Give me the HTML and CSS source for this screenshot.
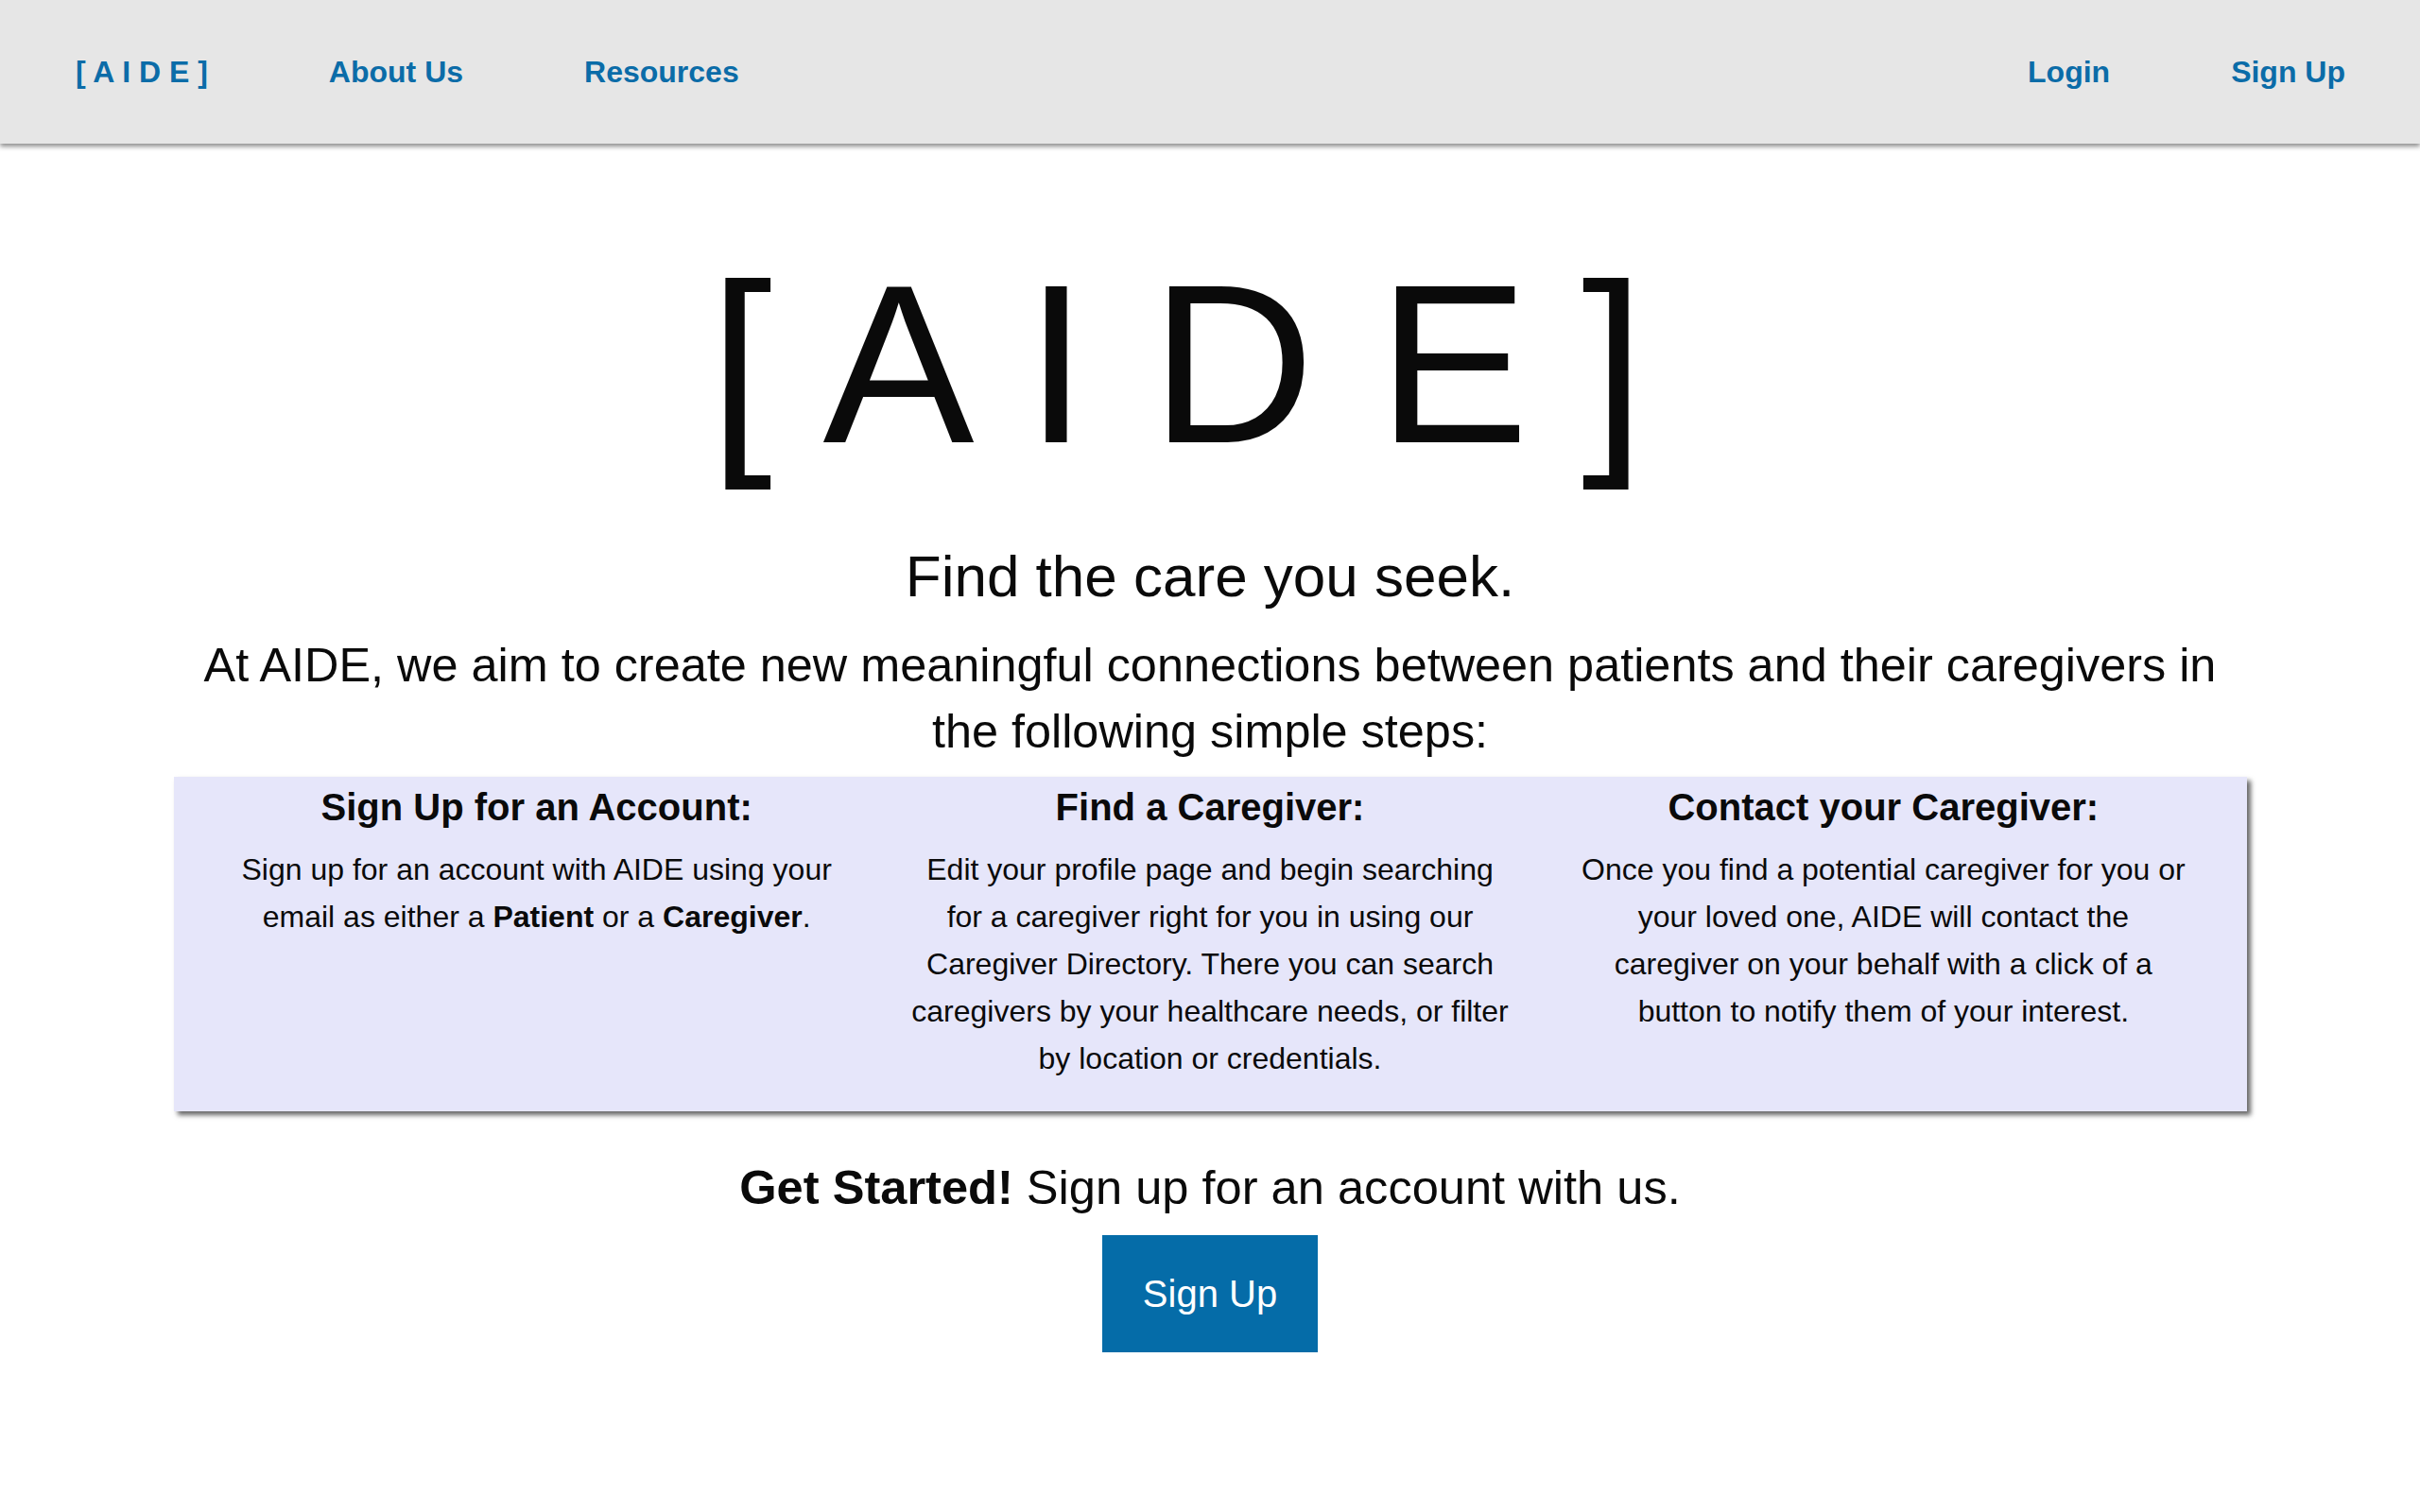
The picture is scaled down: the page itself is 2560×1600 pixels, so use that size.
FILE: index.html
```html
<!DOCTYPE html>
<html lang="en">
<head>
<meta charset="utf-8">
<title>AIDE</title>
<link rel="stylesheet" href="styles.css">
</head>
<body>
<header class="navbar">
  <nav class="nav-left">
    <a class="nav-link" href="#">[ A I D E ]</a>
    <a class="nav-link" href="#">About Us</a>
    <a class="nav-link" href="#">Resources</a>
  </nav>
  <nav class="nav-right">
    <a class="nav-link" href="#">Login</a>
    <a class="nav-link" href="#">Sign Up</a>
  </nav>
</header>
<main class="main">
  <h1 class="logo">[ A I D E <span class="logo-close">]</span></h1>
  <h2 class="tagline">Find the care you seek.</h2>
  <p class="intro">At AIDE, we aim to create new meaningful connections between patients and their caregivers in the following simple steps:</p>
  <section class="steps">
    <div class="step">
      <h3 class="step-title">Sign Up for an Account:</h3>
      <p class="step-text">Sign up for an account with AIDE using your email as either a <b>Patient</b> or a <b>Caregiver</b>.</p>
    </div>
    <div class="step">
      <h3 class="step-title">Find a Caregiver:</h3>
      <p class="step-text">Edit your profile page and begin searching for a caregiver right for you in using our Caregiver Directory. There you can search caregivers by your healthcare needs, or filter by location or credentials.</p>
    </div>
    <div class="step">
      <h3 class="step-title">Contact your Caregiver:</h3>
      <p class="step-text">Once you find a potential caregiver for you or your loved one, AIDE will contact the caregiver on your behalf with a click of a button to notify them of your interest.</p>
    </div>
  </section>
  <p class="cta"><b>Get Started!</b> Sign up for an account with us.</p>
  <a class="btn" href="#">Sign Up</a>
</main>
</body>
</html>
```
FILE: styles.css
```css
* { box-sizing: border-box; }
html, body {
  margin: 0;
  padding: 0;
  background: #ffffff;
}
body {
  font-family: "Liberation Sans", Arial, Helvetica, sans-serif;
  color: #0a0a0a;
}
.navbar {
  height: 152px;
  background: #e6e6e6;
  display: flex;
  align-items: center;
  justify-content: space-between;
  padding: 0 79px 0 80px;
  box-shadow: 0 3px 5px rgba(0, 0, 0, 0.45);
  position: relative;
}
.nav-left, .nav-right {
  display: flex;
  align-items: center;
  gap: 128px;
}
.nav-link {
  font-size: 32px;
  font-weight: bold;
  color: #0b6ca8;
  text-decoration: none;
}
.main {
  display: flex;
  flex-direction: column;
  align-items: center;
  text-align: center;
}
.logo {
  margin: 95px 0 0;
  padding-right: 70px;
  font-size: 240px;
  font-weight: normal;
  line-height: normal;
  white-space: pre;
}
.logo-close {
  margin-left: -11px;
}
.tagline {
  margin: 51px 0 0;
  font-size: 62px;
  font-weight: normal;
  line-height: normal;
}
.intro {
  width: 2193px;
  margin: 24px 0 0;
  font-size: 50.4px;
  line-height: 70px;
}
.steps {
  width: 2193px;
  margin-top: 13px;
  padding: 10px 28px 0;
  background: #e6e6fa;
  box-shadow: 4px 4px 5px rgba(0, 0, 0, 0.6);
  display: grid;
  grid-template-columns: 1fr 1fr 1fr;
}
.step {
  padding: 0 35px;
}
.step-title {
  margin: 0 0 18px;
  font-size: 40px;
  font-weight: bold;
  line-height: normal;
}
.step-text {
  margin: 0 0 31px;
  font-size: 32px;
  line-height: 50px;
}
.cta {
  margin: 51px 0 0;
  font-size: 50.6px;
  line-height: normal;
}
.btn {
  margin-top: 21px;
  display: block;
  padding: 39px 43px;
  background: #056ca8;
  color: #ffffff;
  font-size: 40px;
  line-height: 46px;
  text-decoration: none;
}
```
